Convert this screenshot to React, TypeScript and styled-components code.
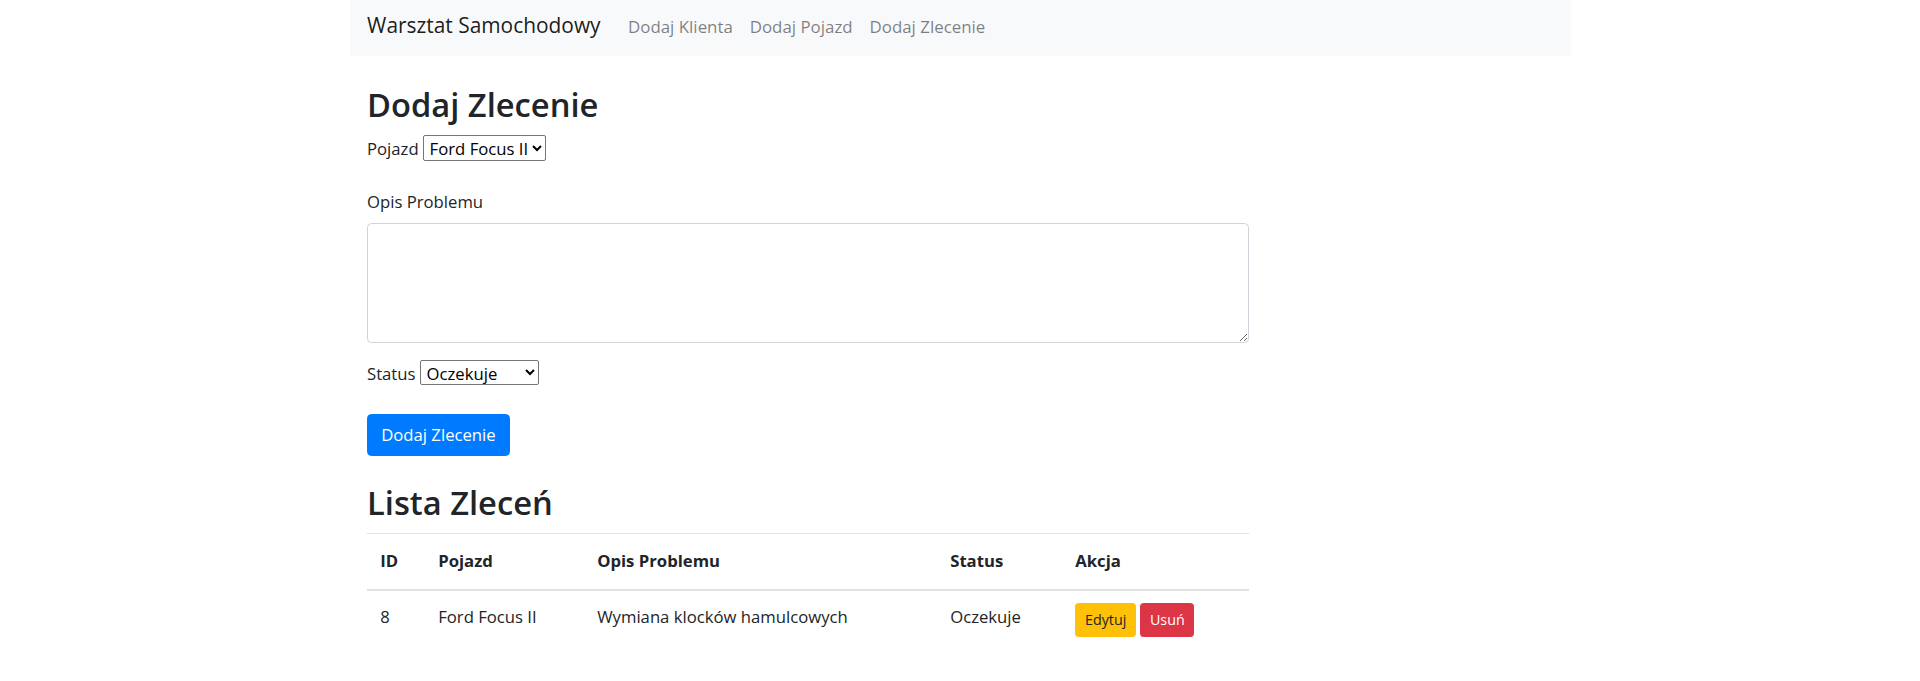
import React from "react";
import styled, { createGlobalStyle } from "styled-components";

const GlobalStyle = createGlobalStyle`
  html, body { margin: 0; padding: 0; background: #fff; }
  body {
    font-family: "Open Sans", "Noto Sans", "DejaVu Sans", sans-serif;
    font-size: 16.7px;
    line-height: 26.4px;
    color: #212529;
  }
  * { box-sizing: border-box; }
`;

const Page = styled.div`
  width: 1221px;
  margin: 0 auto;
`;

const Navbar = styled.nav`
  height: 56px;
  background: #f8f9fa;
  display: flex;
  align-items: baseline;
  padding: 9px 17.6px 0;
`;

const Brand = styled.a`
  font-size: 20.9px;
  line-height: 33px;
  color: rgba(0, 0, 0, 0.9);
  text-decoration: none;
  margin-right: 19px;
`;

const NavLink = styled.a`
  color: rgba(0, 0, 0, 0.5);
  font-size: 16.9px;
  text-decoration: none;
  padding: 0 8.4px;
`;

const Main = styled.main`
  padding: 27.5px 17.5px 0;
  width: 917px;
`;

const Heading = styled.h2<{ $mb: number; $mt?: number }>`
  font-size: 32.7px;
  line-height: 42px;
  font-weight: 600;
  margin: ${(p) => p.$mt ?? 0}px 0 ${(p) => p.$mb}px;
`;

const InlineRow = styled.div<{ $mb: number }>`
  line-height: 26px;
  margin-bottom: ${(p) => p.$mb}px;
`;

const InlineLabel = styled.label`
  margin-right: 4px;
`;

const NativeSelect = styled.select<{ $w: number; $h: number }>`
  width: ${(p) => p.$w}px;
  height: ${(p) => p.$h}px;
  font-family: inherit;
  font-size: 16.7px;
  color: #000;
  background: #fff;
  border: 1px solid #767676;
  border-radius: 2px;
  padding: 0 0 0 2px;
`;

const BlockLabel = styled.label`
  display: block;
  line-height: 26px;
  margin-bottom: 8px;
`;

const TextArea = styled.textarea`
  display: block;
  width: 100%;
  height: 120px;
  border: 1px solid #ced4da;
  border-radius: 4.4px;
  padding: 6.6px 13.2px;
  font-family: inherit;
  font-size: 16.7px;
  resize: vertical;
  margin-bottom: 17px;
`;

const PrimaryButton = styled.button`
  height: 42px;
  padding: 0 13.2px;
  border: 1px solid #007bff;
  background: #007bff;
  color: #fff;
  font-family: inherit;
  font-size: 16.7px;
  border-radius: 4.4px;
`;

const Table = styled.table`
  width: 100%;
  border-collapse: collapse;
  table-layout: fixed;
`;

const Th = styled.th`
  text-align: left;
  font-weight: 700;
  padding: 14.2px 13.2px 14.6px;
  line-height: 26.4px;
  border-top: 1px solid #dee2e6;
  border-bottom: 2px solid #dee2e6;
  vertical-align: bottom;
`;

const Td = styled.td`
  padding: 13.2px;
  line-height: 26.4px;
  vertical-align: top;
`;

const Actions = styled.div`
  display: flex;
  gap: 4px;
  margin-top: -1px;
`;

const SmallButton = styled.button<{ $variant: "warning" | "danger" }>`
  height: 34px;
  padding: 0 8.8px;
  font-family: inherit;
  font-size: 14.3px;
  border-radius: 3.3px;
  border: 1px solid ${(p) => (p.$variant === "warning" ? "#ffc107" : "#dc3545")};
  background: ${(p) => (p.$variant === "warning" ? "#ffc107" : "#dc3545")};
  color: ${(p) => (p.$variant === "warning" ? "#212529" : "#fff")};
`;

const colWidths = [58, 159, 353, 125, 187];

export default function App() {
  return (
    <>
      <GlobalStyle />
      <Page>
        <Navbar>
          <Brand href="#">Warsztat Samochodowy</Brand>
          <NavLink href="#">Dodaj Klienta</NavLink>
          <NavLink href="#">Dodaj Pojazd</NavLink>
          <NavLink href="#">Dodaj Zlecenie</NavLink>
        </Navbar>
        <Main>
          <Heading $mb={9}>Dodaj Zlecenie</Heading>
          <InlineRow $mb={27}>
            <InlineLabel>Pojazd</InlineLabel>
            <NativeSelect $w={123} $h={26} defaultValue="8">
              <option value="8">Ford Focus II</option>
            </NativeSelect>
          </InlineRow>
          <BlockLabel>Opis Problemu</BlockLabel>
          <TextArea />
          <InlineRow $mb={27}>
            <InlineLabel>Status</InlineLabel>
            <NativeSelect $w={119} $h={25} defaultValue="Oczekuje">
              <option>Oczekuje</option>
              <option>W trakcie</option>
              <option>Zakończone</option>
            </NativeSelect>
          </InlineRow>
          <PrimaryButton>Dodaj Zlecenie</PrimaryButton>
          <Heading $mt={26} $mb={9}>Lista Zleceń</Heading>
          <Table>
            <colgroup>
              {colWidths.map((w, i) => (
                <col key={i} style={{ width: w }} />
              ))}
            </colgroup>
            <thead>
              <tr>
                <Th>ID</Th>
                <Th>Pojazd</Th>
                <Th>Opis Problemu</Th>
                <Th>Status</Th>
                <Th>Akcja</Th>
              </tr>
            </thead>
            <tbody>
              <tr>
                <Td>8</Td>
                <Td>Ford Focus II</Td>
                <Td>Wymiana klocków hamulcowych</Td>
                <Td>Oczekuje</Td>
                <Td>
                  <Actions>
                    <SmallButton $variant="warning">Edytuj</SmallButton>
                    <SmallButton $variant="danger">Usuń</SmallButton>
                  </Actions>
                </Td>
              </tr>
            </tbody>
          </Table>
        </Main>
      </Page>
    </>
  );
}
